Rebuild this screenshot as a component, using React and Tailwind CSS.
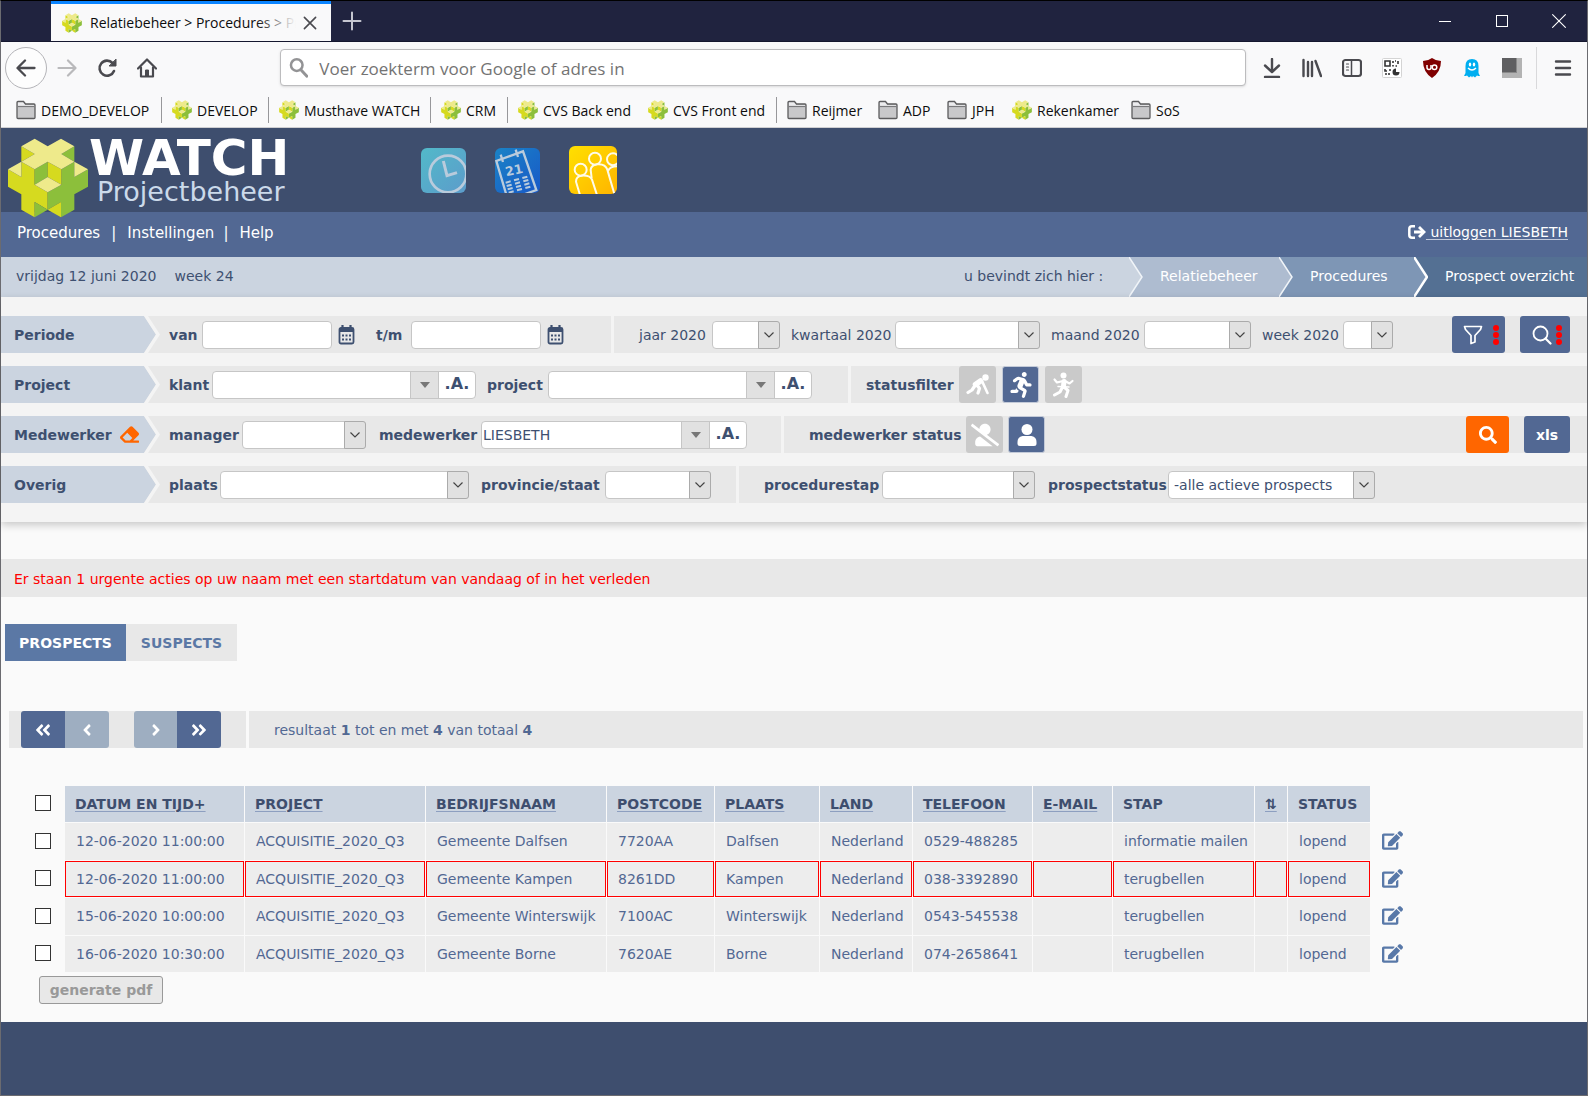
import React from "react";
import {
  FaAngleDoubleLeft,
  FaAngleDoubleRight,
  FaAngleLeft,
  FaAngleRight,
  FaEdit,
  FaEraser,
  FaRunning,
  FaSearch,
  FaUserSlash,
} from "react-icons/fa";

/* ---------- logo and drawn icons ---------- */

function CubeLogo({ className }) {
  return (
    <svg viewBox="22 31 244 240" className={className} aria-hidden="true">
      <path fill="#d6da1f" d="M64 56 104 79 64 102ZM24 125 64 148V102L104 125V171L143 194V246L104 223V269L64 246V200L24 177Z" />
      <path fill="#8cbf3b" d="M223 56 184 79 223 102ZM264 125 223 148V102L184 125V171L143 194V246L183 223V269L223 246V200L264 177Z" />
      <path fill="#8cbf3b" d="M104 125 143 102V148L104 171ZM104 223V269L143 246Z" />
      <path fill="#d6da1f" d="M184 125 143 102V148L184 171ZM183 223V269L143 246Z" />
      <path
        fill="#eeea8b"
        d="M64 56 104 33 143 56 183 33 223 56 184 79 223 102 184 125 143 102 104 125 64 102 104 79ZM24 125 64 102V148ZM223 102 264 125 223 148ZM143 148 184 171 143 194 104 171Z"
      />
    </svg>
  );
}

function ClockTile() {
  return (
    <svg viewBox="31 38 135 135" className="size-[45px] rounded-md" aria-hidden="true">
      <defs>
        <linearGradient id="clockFill" x1="0" y1="0" x2="1" y2="1">
          <stop offset="0" stopColor="#52b9c9" />
          <stop offset="1" stopColor="#5c9ccb" />
        </linearGradient>
      </defs>
      <rect x="31" y="38" width="135" height="135" fill="url(#clockFill)" />
      <circle cx="112" cy="116" r="55" fill="none" stroke="#b9cbdc" strokeWidth="8" />
      <path d="M98 77 109 121 139 112" fill="none" stroke="#b9cbdc" strokeWidth="9" />
    </svg>
  );
}

function CalendarTile() {
  const columns = [288, 313, 338];
  return (
    <svg viewBox="256 38 135 135" className="size-[45px] rounded-md" aria-hidden="true">
      <defs>
        <linearGradient id="calFill" x1="0" y1="0" x2="1" y2="1">
          <stop offset="0" stopColor="#1a83c6" />
          <stop offset="1" stopColor="#1859c8" />
        </linearGradient>
      </defs>
      <rect x="256" y="38" width="135" height="135" fill="url(#calFill)" />
      <path d="M292 185 260 77 340 48 380 164 330 182" fill="none" stroke="#b9cbdc" strokeWidth="7" />
      <path d="M273 58 280 80M318 43 325 65" stroke="#b9cbdc" strokeWidth="7" />
      <text x="290" y="123" transform="rotate(-12 290 123)" fill="#b9cbdc" fontFamily="DejaVu Sans" fontWeight="700" fontSize="38">
        21
      </text>
      {columns.map((x, i) => (
        <g key={x} transform={`translate(${x} ${139 - i * 7})`} stroke="#b9cbdc" strokeWidth="6">
          <path d="M0 3 15-1M3 13 18 9M6 23 21 19M9 33 24 29" />
        </g>
      ))}
    </svg>
  );
}

function PeopleTile() {
  return (
    <svg viewBox="477 33 144 144" className="size-12 rounded-md" aria-hidden="true">
      <defs>
        <linearGradient id="peopleFill" x1="0" y1="0" x2="1" y2="1">
          <stop offset="0" stopColor="#ffe000" />
          <stop offset="1" stopColor="#ffb400" />
        </linearGradient>
      </defs>
      <rect x="477" y="33" width="144" height="144" fill="url(#peopleFill)" />
      <g fill="none" stroke="#fffbe8" strokeWidth="6">
        <circle cx="512" cy="104" r="18" />
        <circle cx="555" cy="71" r="18" />
        <circle cx="609" cy="73" r="18" />
        <path d="M510 180 498 140Q498 124 514 122 540 120 546 134L561 180" />
        <path d="M545 130 542 104Q544 90 562 88 586 86 592 104L614 180" />
        <path d="M594 108Q600 94 622 94" />
      </g>
    </svg>
  );
}

function Folder() {
  return (
    <svg viewBox="0 0 20 20" className="size-5" aria-hidden="true">
      <path d="M1 2.5Q1 1.5 2 1.5H7.5L9.5 4H18Q19 4 19 5V17.5Q19 18.500 18 18.500H2Q1 18.500 1 17.500Z" fill="#c8c8ca" stroke="#5c5c5e" strokeWidth="1.300" />
      <path d="M2 2.500H7L9 5H18V6H2Z" fill="#ececee" />
      <path d="M1.500 6.500H18.500" stroke="#7a7a7c" strokeWidth="1.200" />
    </svg>
  );
}

function Icon({ children, size = "size-5", color = "#4a4a4f", width = 2 }) {
  return (
    <svg viewBox="0 0 20 20" className={size} fill="none" stroke={color} strokeWidth={width} strokeLinecap="round" strokeLinejoin="round" aria-hidden="true">
      {children}
    </svg>
  );
}

function DateIcon() {
  return (
    <svg viewBox="0 0 17 20" className="h-5 w-[17px]" aria-hidden="true">
      <path d="M4.500 0V4M12.500 0V4" stroke="#3e5070" strokeWidth="2.200" />
      <rect x="1.500" y="3" width="14" height="15.500" rx="1.500" fill="none" stroke="#3e5070" strokeWidth="1.800" />
      <rect x="1.500" y="3" width="14" height="4" fill="#3e5070" />
      <path d="M4 10.500H13M4 14.500H13" stroke="#3e5070" strokeWidth="2.200" strokeDasharray="2 1.500" />
    </svg>
  );
}

function FunnelIcon() {
  return (
    <svg viewBox="0 0 20 20" className="size-5" fill="none" stroke="#fff" strokeWidth="1.700" strokeLinejoin="round" aria-hidden="true">
      <path d="M1.500 1.500H18.500L17.500 4.500 12 10.500V17L8 18.500V10.500L2.500 4.500Z" />
    </svg>
  );
}

function LensIcon() {
  return (
    <svg viewBox="0 0 20 20" className="size-5" fill="none" stroke="#fff" strokeWidth="1.800" strokeLinecap="round" aria-hidden="true">
      <circle cx="8.500" cy="8.500" r="7" />
      <path d="M13.500 13.500 18.500 18.500" strokeWidth="2.200" />
    </svg>
  );
}

function StartFigure() {
  return (
    <svg viewBox="0 0 24 24" className="size-6" fill="none" stroke="#fff" strokeLinecap="round" strokeLinejoin="round" aria-hidden="true">
      <circle cx="19.500" cy="4.500" r="3.200" fill="#fff" stroke="none" />
      <path d="M14.500 8 9.500 11.500" strokeWidth="5.500" />
      <path d="M16 8 21.500 20" strokeWidth="2.600" />
      <path d="M11 12 13.500 15.500 12 20M8 14 6 17 2 19.500" strokeWidth="3.200" />
    </svg>
  );
}

function FinishFigure() {
  return (
    <svg viewBox="0 0 24 26" className="h-[26px] w-6" fill="none" stroke="#fff" strokeLinecap="round" strokeLinejoin="round" aria-hidden="true">
      <circle cx="11.500" cy="3.500" r="3" fill="#fff" stroke="none" />
      <path d="M12 9.500 11.500 14" strokeWidth="5" />
      <path d="M11 9 5 10.500 2.500 7.500M13 9 17.500 11.500 20.500 9" strokeWidth="2.200" />
      <path d="M10.500 15 8 20 2.500 23M12 15 16 18.500 14 24.500" strokeWidth="3" />
      <path d="M6 14.500 17 15" strokeWidth="1.500" />
    </svg>
  );
}

function PersonFigure() {
  return (
    <svg viewBox="0 0 20 22" className="h-[22px] w-5" fill="#fff" aria-hidden="true">
      <circle cx="10" cy="5.500" r="5.500" />
      <path d="M5.500 12H14.500Q19.500 13 19.500 18V19.500Q19.500 22 17 22H3Q.5 22 .5 19.500V18Q.5 13 5.500 12Z" />
    </svg>
  );
}

function LogoutIcon() {
  return (
    <svg viewBox="0 0 18 14" className="h-3.5 w-[18px]" fill="none" stroke="#fff" strokeWidth="2.500" aria-hidden="true">
      <path d="M7 1.300H4Q1.300 1.300 1.300 4V10Q1.300 12.700 4 12.700H7" />
      <path d="M6 7H14" strokeWidth="3" />
      <path d="M11 2 16 7 11 12" strokeWidth="2.800" />
    </svg>
  );
}

/* ---------- browser chrome ---------- */

function TitleBar() {
  return (
    <div className="flex h-[41px] items-stretch border-b border-[#15172f] bg-[#20233f]">
      <div className="ml-[50px] flex w-[280px] items-center border-t-[3px] border-[#0a84ff] bg-[#f9f9fa] pl-[11px] pr-[13px]">
        <CubeLogo className="size-5 shrink-0" />
        <div className="relative ml-2 flex-1 overflow-hidden whitespace-nowrap text-sm text-[#0c0c0d]">
          Relatiebeheer &gt; Procedures &gt; Prospect overzicht
          <span className="absolute inset-y-0 right-0 w-10 bg-linear-to-l from-[#f9f9fa] to-transparent" />
        </div>
        <button type="button" aria-label="Tabblad sluiten" className="ml-1.5">
          <Icon size="size-4">
            <path d="M3 3 17 17M17 3 3 17" />
          </Icon>
        </button>
      </div>
      <button type="button" aria-label="Nieuw tabblad" className="ml-[11px] self-center">
        <Icon color="#c5c6d0">
          <path d="M10 1.500V18.500M1.500 10H18.500" />
        </Icon>
      </button>
      <div className="ml-auto flex items-center">
        <button type="button" aria-label="Minimaliseren" className="flex w-[57px] justify-center">
          <span className="h-px w-3 bg-white" />
        </button>
        <button type="button" aria-label="Maximaliseren" className="flex w-[57px] justify-center">
          <span className="size-3 border border-white" />
        </button>
        <button type="button" aria-label="Sluiten" className="flex w-[57px] justify-center">
          <Icon size="size-4" color="#fff" width={1.4}>
            <path d="M2 2 18 18M18 2 2 18" />
          </Icon>
        </button>
      </div>
    </div>
  );
}

function ToolButton({ label, children }) {
  return (
    <button type="button" aria-label={label} className="flex w-10 shrink-0 justify-center">
      {children}
    </button>
  );
}

function NavBar() {
  return (
    <div className="flex h-[51px] items-center pl-1">
      <button type="button" aria-label="Vorige" className="flex size-[42px] shrink-0 items-center justify-center rounded-full border border-[#b4b4b8] bg-[#fdfdfd]">
        <Icon width={2.3}>
          <path d="M18.500 10H2M9 2.500 1.500 10 9 17.500" />
        </Icon>
      </button>
      <ToolButton label="Volgende">
        <Icon color="#b9b9bb" width={2.2}>
          <path d="M1.500 10H18M11 2.500 18.500 10 11 17.500" />
        </Icon>
      </ToolButton>
      <ToolButton label="Vernieuwen">
        <Icon width={2.6}>
          <path d="M17 13A7.500 7.500 0 1 1 15.500 5" />
          <path d="M19 1.500V8H12.500Z" fill="#4a4a4f" strokeWidth="1" />
        </Icon>
      </ToolButton>
      <ToolButton label="Startpagina">
        <Icon width={2.2}>
          <path d="M1 10.500 10 1.500 19 10.500M4 9.500V18.500H16V9.500" />
          <path d="M8.500 18V12H11.500V18Z" fill="#4a4a4f" strokeWidth="1" />
        </Icon>
      </ToolButton>
      <div className="ml-[113px] flex h-[37px] flex-1 items-center rounded-sm border border-[#bcbcbe] bg-white pl-2 shadow-sm">
        <Icon color="#939395" width={2.6}>
          <circle cx="8" cy="7" r="6" />
          <path d="M12.500 12 18.500 18.500" strokeWidth="3" />
        </Icon>
        <input
          type="text"
          aria-label="Adresbalk"
          placeholder="Voer zoekterm voor Google of adres in"
          className="ml-[11px] w-full bg-transparent pt-0.5 text-[17px] outline-none placeholder:text-[#737373]"
        />
      </div>
      <div className="ml-1.5 flex items-center">
        <ToolButton label="Downloads">
          <Icon width={2.4}>
            <path d="M10 1V13M3 7.500 10 14 17 7.500M3 19H17" />
          </Icon>
        </ToolButton>
        <ToolButton label="Bibliotheek">
          <Icon width={2.4}>
            <path d="M1.500 2V18M6 4V18M10 4V18M13.500 3 19 18" />
          </Icon>
        </ToolButton>
        <ToolButton label="Zijbalk">
          <Icon width={2.2}>
            <rect x="1" y="2" width="18" height="16" rx="2.500" />
            <path d="M9.500 2V18" strokeWidth="1.500" />
            <path d="M4.500 6H6.500M4.500 9H6.500M4.500 12H6.500" strokeWidth="1.200" />
          </Icon>
        </ToolButton>
        <ToolButton label="QR-code">
          <svg viewBox="0 0 20 20" className="size-5" aria-hidden="true">
            <rect x=".5" y=".5" width="19" height="19" rx="1" fill="#fff" stroke="#d4d4d4" />
            <path d="M3 3H8V8H3ZM11 3V5M11 7V8.500M13 3H14M16 3V6M13.500 8H15M3 11V13H5M7 12H9M3 16H5M7 15V17" fill="none" stroke="#333" strokeWidth="1.600" />
            <path d="M14 10.500A3.500 3.500 0 1 0 17.500 14H14Z" fill="#333" />
          </svg>
        </ToolButton>
        <ToolButton label="uBlock Origin">
          <svg viewBox="0 0 20 20" className="size-5" aria-hidden="true">
            <path d="M10 0Q14 3 19 3 19 14 10 20 1 14 1 3 6 3 10 0Z" fill="#800000" />
            <path d="M5 7V9.500Q5 11.500 7 11.500 9 11.500 9 9.500V7" fill="none" stroke="#fff" strokeWidth="1.500" />
            <circle cx="12.500" cy="9.200" r="2.300" fill="none" stroke="#fff" strokeWidth="1.500" />
          </svg>
        </ToolButton>
        <ToolButton label="Ghostery">
          <svg viewBox="0 0 20 20" className="size-5" aria-hidden="true">
            <path d="M10 1Q16.500 1 16.500 8V15L18 18Q16 18 15 17.500L13 19.500 11 18 10 19.500 9 18 7 19.500 5 17.500Q4 18 2 18L3.500 15V8Q3.500 1 10 1Z" fill="#00aef0" />
            <ellipse cx="8" cy="6.500" rx="1.200" ry="2" fill="#fff" />
            <ellipse cx="12" cy="6.500" rx="1.200" ry="2" fill="#fff" />
            <path d="M6 10Q10 14 14 10" fill="none" stroke="#fff" strokeWidth="1.400" />
          </svg>
        </ToolButton>
        <ToolButton label="Extensie">
          <svg viewBox="0 0 20 20" className="size-5" aria-hidden="true">
            <path d="M0 0H20V20H0Z" fill="#b3b3b3" />
            <path d="M0 0H15V15H0Z" fill="#8a8a8a" />
            <path d="M0 0H14V14H0Z" fill="#5f5f61" />
          </svg>
        </ToolButton>
        <span className="ml-1 h-[42px] w-px bg-[#d9d9db]" />
        <button type="button" aria-label="Menu" className="ml-4 mr-3.5">
          <Icon width={2.4}>
            <path d="M3 3.500H17M3 10H17M3 16.500H17" />
          </Icon>
        </button>
      </div>
    </div>
  );
}

const bookmarks = [
  { label: "DEMO_DEVELOP", folder: true, width: "w-[145px]", divider: true },
  { label: "DEVELOP", width: "w-[96px]", divider: true },
  { label: "Musthave WATCH", width: "w-[151px]", divider: true },
  { label: "CRM", width: "w-[66px]", divider: true },
  { label: "CVS Back end", width: "w-[130px]" },
  { label: "CVS Front end", width: "w-[128px]", divider: true },
  { label: "Reijmer", folder: true, width: "w-[91px]" },
  { label: "ADP", folder: true, width: "w-[69px]" },
  { label: "JPH", folder: true, width: "w-[65px]" },
  { label: "Rekenkamer", width: "w-[119px]" },
  { label: "SoS", folder: true, width: "w-[60px]" },
];

function BookmarksBar() {
  return (
    <nav aria-label="Bladwijzers" className="flex h-[35px] items-center border-b border-[#cfcfd2] pl-[15px] text-sm text-[#0c0c0d]">
      {bookmarks.map((b) => (
        <React.Fragment key={b.label}>
          <a href="#" className={`flex shrink-0 items-center gap-[5px] whitespace-nowrap ${b.width}`}>
            {b.folder ? <Folder /> : <CubeLogo className="size-5" />}
            <span className="pt-0.5">{b.label}</span>
          </a>
          {b.divider && <span className="mr-2.5 h-[26px] w-px bg-[#97979a]" />}
        </React.Fragment>
      ))}
    </nav>
  );
}

/* ---------- application header ---------- */

function AppHeader() {
  return (
    <header>
      <div className="flex h-[84px] bg-[#3e4e6e]">
        <div className="flex w-[420px] shrink-0 pl-1.5 pt-2.5">
          <CubeLogo className="relative z-10 h-20 w-[82px] shrink-0" />
          <div>
            <div className="text-[50px] font-bold leading-[40px] text-white">WATCH</div>
            <div className="pl-2 text-[27px] leading-[27px] text-[#cbdaea]">Projectbeheer</div>
          </div>
        </div>
        <div className="flex items-center gap-[29px]">
          <a href="#" aria-label="Uren"><ClockTile /></a>
          <a href="#" aria-label="Agenda"><CalendarTile /></a>
          <a href="#" aria-label="Relaties"><PeopleTile /></a>
        </div>
      </div>
      <div className="flex h-[45px] justify-between bg-[#526893] pl-4 pr-[19px] text-white">
        <nav className="flex h-[43px] items-center text-[15px]">
          <a href="#">Procedures</a>
          <span className="px-[11px]">|</span>
          <a href="#">Instellingen</a>
          <span className="pl-[9px] pr-[11px]">|</span>
          <a href="#">Help</a>
        </nav>
        <a href="#" className="flex h-10 items-center text-sm">
          <LogoutIcon />
          <span className="underline decoration-[#c3cbdc] underline-offset-2">&nbsp;uitloggen LIESBETH</span>
        </a>
      </div>
    </header>
  );
}

function CrumbArrow({ from, to, line, width }) {
  return (
    <svg viewBox="0 0 14 40" className="h-10 w-3.5 shrink-0" aria-hidden="true">
      <path d="M0 0H14V40H0Z" fill={to} />
      <path d="M0 0 13 20 0 40Z" fill={from} />
      <path d="M0 0 13 20 0 40" fill="none" stroke={line} strokeWidth={width} />
    </svg>
  );
}

function Breadcrumbs() {
  return (
    <div className="flex h-10 items-stretch justify-between bg-[#cbd4e0] text-sm leading-[38px] text-[#3e5070]">
      <div className="flex gap-[18px] pl-[15px]">
        <span>vrijdag 12 juni 2020</span>
        <span>week 24</span>
      </div>
      <nav aria-label="Kruimelpad" className="flex whitespace-nowrap">
        <span className="w-[165px]">u bevindt zich hier :</span>
        <CrumbArrow from="#cbd4e0" to="#aebcd0" line="#f0f4f8" width={1.5} />
        <a href="#" className="w-[136px] bg-[#aebcd0] pl-[17px] text-white">Relatiebeheer</a>
        <CrumbArrow from="#aebcd0" to="#7e96b5" line="#f0f4f8" width={1.5} />
        <a href="#" className="w-[121px] bg-[#7e96b5] pl-[17px] text-white">Procedures</a>
        <CrumbArrow from="#7e96b5" to="#547093" line="#ffffff" width={2.5} />
        <a href="#" className="w-[159px] bg-[#547093] pl-[17px] text-white">Prospect overzicht</a>
      </nav>
    </div>
  );
}

/* ---------- filter panel ---------- */

const fieldBox = "h-7 rounded-[4px] border border-[#c6c6c6] bg-white text-sm text-[#3e5070] outline-none";

function SelectField({ id, label, labelClass = "", width, options = [""] }) {
  return (
    <div className="flex shrink-0 items-center">
      <label htmlFor={id} className={`shrink-0 whitespace-nowrap ${labelClass}`}>
        {label}
      </label>
      <span className={`relative flex ${width}`}>
        <select id={id} className={`w-full appearance-none pl-[5px] font-normal ${fieldBox}`}>
          {options.map((o) => (
            <option key={o}>{o}</option>
          ))}
        </select>
        <span className="pointer-events-none absolute inset-y-0 right-0 flex w-[22px] items-center justify-center rounded-r-[3px] border border-[#ababab] bg-[#e1e1e1]">
          <svg viewBox="0 0 10 6" className="h-1.5 w-2.5" fill="none" stroke="#444" strokeWidth="1.200" aria-hidden="true">
            <path d="M.5 .5 5 5 9.500 .5" />
          </svg>
        </span>
      </span>
    </div>
  );
}

function DateField({ id, label, labelClass }) {
  return (
    <div className="flex shrink-0 items-center">
      <label htmlFor={id} className={`shrink-0 ${labelClass}`}>{label}</label>
      <input id={id} type="text" className={`w-[130px] px-1 font-normal ${fieldBox}`} />
      <button type="button" aria-label={`Kalender ${label}`} className="ml-1.5">
        <DateIcon />
      </button>
    </div>
  );
}

function ComboField({ id, label, labelClass, width, value }) {
  return (
    <div className="flex shrink-0 items-center">
      <label htmlFor={id} className={`shrink-0 ${labelClass}`}>{label}</label>
      <div className={`flex items-center overflow-hidden ${width} ${fieldBox}`}>
        <input id={id} type="text" defaultValue={value} className="h-full min-w-0 flex-1 pl-px text-sm font-normal outline-none" />
        <button type="button" aria-label={`${label} kiezen`} className="flex h-full w-[29px] items-center justify-center border-x border-[#c6c6c6] bg-[#e1e1e1]">
          <span className="border-x-[5px] border-t-[6px] border-x-transparent border-t-[#777]" />
        </button>
        <button type="button" className="w-9 pb-0.5 text-base font-bold leading-5">.A.</button>
      </div>
    </div>
  );
}

function FilterRow({ title, icon, leftWidth, left, right, rightPad = "pl-[25px]", actions }) {
  return (
    <section className="flex h-[37px] bg-[#e8e8e8]">
      <h2 className="flex w-[143px] shrink-0 items-center bg-[#cbd4e0] pl-[13px] font-bold">
        {title}
        {icon}
      </h2>
      <svg viewBox="0 0 16 37" className="h-[37px] w-4 shrink-0" aria-hidden="true">
        <path d="M0 0 12 18.500 0 37Z" fill="#cbd4e0" />
        <path d="M0 0H4L16 18.500 4 37H0L12 18.500Z" fill="#f4f4f4" />
      </svg>
      <div className={`flex shrink-0 items-center pl-[9px] font-bold ${leftWidth}`}>{left}</div>
      <div className={`flex flex-1 items-center border-l-[3px] border-[#f4f4f4] ${rightPad}`}>
        {right}
        {actions && <div className="ml-auto flex gap-[15px] pr-[17px]">{actions}</div>}
      </div>
    </section>
  );
}

const toggleOff = "flex size-[37px] items-center justify-center rounded-[3px] bg-[#cacaca] text-white";
const toggleOn = "flex size-[37px] items-center justify-center rounded-[3px] border border-[#c3cad8] bg-[#526893] text-white";
const actionButton = "flex h-[37px] items-center justify-center rounded-[3px] bg-[#526893] text-white";

function RedDots() {
  return (
    <span className="flex flex-col gap-px">
      <span className="size-1.5 rounded-full bg-[#ff0000]" />
      <span className="size-1.5 rounded-full bg-[#ff0000]" />
      <span className="size-1.5 rounded-full bg-[#ff0000]" />
    </span>
  );
}

function Filters() {
  return (
    <form className="flex flex-col gap-[13px] bg-[#f4f4f4] py-[19px] text-sm text-[#3e5070] shadow-[0_3px_8px_rgba(0,0,0,0.2)]">
      <FilterRow
        title="Periode"
        leftWidth="w-[451px] gap-[21px]"
        left={
          <>
            <DateField id="van" label="van" labelClass="w-[33px]" />
            <DateField id="tm" label="t/m" labelClass="w-[35px]" />
          </>
        }
        right={
          <div className="flex gap-[11px]">
            <SelectField id="jaar" label="jaar 2020" labelClass="w-[73px]" width="w-[68px]" />
            <SelectField id="kwartaal" label="kwartaal 2020" labelClass="w-[104px]" width="w-[145px]" />
            <SelectField id="maand" label="maand 2020" labelClass="w-[93px]" width="w-[107px]" />
            <SelectField id="week" label="week 2020" labelClass="w-[81px]" width="w-[50px]" />
          </div>
        }
        actions={
          <>
            <button type="button" aria-label="Filteropties" className={`w-[53px] gap-2.5 pl-1 ${actionButton}`}>
              <FunnelIcon />
              <RedDots />
            </button>
            <button type="button" aria-label="Zoekopties" className={`w-[50px] gap-1 pl-1 ${actionButton}`}>
              <LensIcon />
              <RedDots />
            </button>
          </>
        }
      />
      <FilterRow
        title="Project"
        leftWidth="w-[688px] gap-[11px]"
        rightPad="pl-[15px]"
        left={
          <>
            <ComboField id="klant" label="klant" labelClass="w-[43px]" width="w-[264px]" />
            <ComboField id="project" label="project" labelClass="w-[61px]" width="w-[264px]" />
          </>
        }
        right={
          <div className="flex items-center gap-1.5">
            <span className="w-[87px] font-bold">statusfilter</span>
            <button type="button" aria-label="Te starten" className={toggleOff}><StartFigure /></button>
            <button type="button" aria-label="Lopend" aria-pressed="true" className={toggleOn}><FaRunning className="size-[26px]" /></button>
            <button type="button" aria-label="Afgerond" className={toggleOff}><FinishFigure /></button>
          </div>
        }
      />
      <FilterRow
        title="Medewerker"
        icon={<FaEraser className="ml-2 size-[19px] text-[#ff6600]" />}
        leftWidth="w-[621px] gap-[13px]"
        left={
          <>
            <SelectField id="manager" label="manager" labelClass="w-[73px]" width="w-[124px]" />
            <ComboField id="medewerker" label="medewerker" labelClass="w-[102px]" width="w-[266px]" value="LIESBETH" />
          </>
        }
        right={
          <div className="flex items-center gap-[5px]">
            <span className="w-[152px] whitespace-nowrap font-bold">medewerker status</span>
            <button type="button" aria-label="Inactief" className={toggleOff}><FaUserSlash className="size-7" /></button>
            <button type="button" aria-label="Actief" aria-pressed="true" className={toggleOn}><PersonFigure /></button>
          </div>
        }
        actions={
          <>
            <button type="submit" aria-label="Zoeken" className="flex h-[37px] w-[43px] items-center justify-center rounded-[3px] bg-[#ff6600] text-white">
              <FaSearch className="size-[18px]" />
            </button>
            <button type="button" className={`w-[46px] font-bold ${actionButton}`}>xls</button>
          </>
        }
      />
      <FilterRow
        title="Overig"
        leftWidth="w-[576px] gap-3"
        left={
          <>
            <SelectField id="plaats" label="plaats" labelClass="w-[51px]" width="w-[249px]" />
            <SelectField id="provincie" label="provincie/staat" labelClass="w-[124px]" width="w-[106px]" />
          </>
        }
        right={
          <div className="flex gap-[13px] font-bold">
            <SelectField id="procedurestap" label="procedurestap" labelClass="w-[118px]" width="w-[153px]" />
            <SelectField id="prospectstatus" label="prospectstatus" labelClass="w-[120px]" width="w-[207px]" options={["-alle actieve prospects"]} />
          </div>
        }
      />
    </form>
  );
}

/* ---------- results ---------- */

function Pager() {
  return (
    <div className="ml-2 mr-1 flex h-[37px] bg-[#e8e8e8] text-sm text-[#526893]">
      <div className="flex w-[237px] gap-[25px] pl-3 text-white">
        <div className="flex">
          <button type="button" aria-label="Eerste" className="flex w-11 items-center justify-center rounded-l-[3px] bg-[#526893]">
            <FaAngleDoubleLeft className="size-[18px]" />
          </button>
          <button type="button" aria-label="Vorige pagina" className="flex w-11 items-center justify-center rounded-r-[3px] bg-[#9eaec1]">
            <FaAngleLeft className="size-[18px]" />
          </button>
        </div>
        <div className="flex">
          <button type="button" aria-label="Volgende pagina" className="flex w-[43px] items-center justify-center rounded-l-[3px] bg-[#9eaec1]">
            <FaAngleRight className="size-[18px]" />
          </button>
          <button type="button" aria-label="Laatste" className="flex w-11 items-center justify-center rounded-r-[3px] bg-[#526893]">
            <FaAngleDoubleRight className="size-[18px]" />
          </button>
        </div>
      </div>
      <p className="flex-1 border-l-[3px] border-[#fafafa] pl-[25px] leading-[39px]">
        resultaat <b>1</b> tot en met <b>4</b> van totaal <b>4</b>
      </p>
    </div>
  );
}

const columns = [
  { label: "DATUM EN TIJD+", width: "w-[179px]", sort: true },
  { label: "PROJECT", width: "w-[180px]", sort: true },
  { label: "BEDRIJFSNAAM", width: "w-[180px]", sort: true },
  { label: "POSTCODE", width: "w-[107px]", sort: true },
  { label: "PLAATS", width: "w-[104px]", sort: true },
  { label: "LAND", width: "w-[92px]", sort: true },
  { label: "TELEFOON", width: "w-[119px]", sort: true },
  { label: "E-MAIL", width: "w-[79px]", sort: true },
  { label: "STAP", width: "w-[141px]" },
  { label: "⇅", width: "w-[32px]", sort: true },
  { label: "STATUS", width: "w-[82px]" },
];

const rows = [
  { cells: ["12-06-2020 11:00:00", "ACQUISITIE_2020_Q3", "Gemeente Dalfsen", "7720AA", "Dalfsen", "Nederland", "0529-488285", "", "informatie mailen", "", "lopend"] },
  { urgent: true, cells: ["12-06-2020 11:00:00", "ACQUISITIE_2020_Q3", "Gemeente Kampen", "8261DD", "Kampen", "Nederland", "038-3392890", "", "terugbellen", "", "lopend"] },
  { cells: ["15-06-2020 10:00:00", "ACQUISITIE_2020_Q3", "Gemeente Winterswijk", "7100AC", "Winterswijk", "Nederland", "0543-545538", "", "terugbellen", "", "lopend"] },
  { cells: ["16-06-2020 10:30:00", "ACQUISITIE_2020_Q3", "Gemeente Borne", "7620AE", "Borne", "Nederland", "074-2658641", "", "terugbellen", "", "lopend"] },
];

const checkBox = "block size-4 appearance-none border border-[#333] bg-white";

function ProspectTable() {
  return (
    <table className="ml-[33px] table-fixed border-separate border-spacing-px text-left text-sm text-[#526893]">
      <colgroup>
        <col className="w-[29px]" />
        {columns.map((c) => (
          <col key={c.label} className={c.width} />
        ))}
        <col className="w-9" />
      </colgroup>
      <thead>
        <tr className="h-9 text-[#3e4e6e]">
          <td className="pb-0.5">
            <input type="checkbox" aria-label="Alles selecteren" className={checkBox} />
          </td>
          {columns.map((c) => (
            <th key={c.label} scope="col" className="whitespace-nowrap bg-[#cbd4e0] pl-2.5 font-bold">
              {c.sort ? (
                <a href="#" className="underline decoration-[#8d9fc0] underline-offset-2">{c.label}</a>
              ) : (
                c.label
              )}
            </th>
          ))}
          <td />
        </tr>
      </thead>
      <tbody>
        {rows.map((r) => (
          <tr key={r.cells[0] + r.cells[2]} className="h-[37px] even:h-9">
            <td className="pb-0.5">
              <input type="checkbox" aria-label={`Selecteer ${r.cells[2]}`} className={checkBox} />
            </td>
            {r.cells.map((cell, i) => (
              <td
                key={i}
                className={
                  r.urgent
                    ? "whitespace-nowrap border border-[#ff0000] bg-[#ededed] pb-px pl-2.5"
                    : "whitespace-nowrap border border-[#ededed] bg-[#ededed] pb-px pl-2.5"
                }
              >
                {cell}
              </td>
            ))}
            <td className="pb-0.5 pl-[11px]">
              <a href="#" aria-label={`Bewerk ${r.cells[2]}`} className="block text-[#5878a8]">
                <FaEdit className="size-[21px]" />
              </a>
            </td>
          </tr>
        ))}
      </tbody>
    </table>
  );
}

export default function App() {
  return (
    <div className="flex min-h-screen flex-col border border-[#6b6b70] border-t-black bg-[#fafafa] font-['DejaVu_Sans',Verdana,sans-serif]">
      <div className="bg-[#f9f9fa] font-['Open_Sans','Segoe_UI',sans-serif]">
        <TitleBar />
        <NavBar />
        <BookmarksBar />
      </div>
      <AppHeader />
      <Breadcrumbs />
      <Filters />
      <main className="pb-[18px]">
        <p className="mt-[37px] h-[38px] bg-[#e8e8e8] pl-[13px] text-sm leading-[40px] text-[#ff0000]">
          Er staan 1 urgente acties op uw naam met een startdatum van vandaag of in het verleden
        </p>
        <div role="tablist" className="ml-1 mt-[27px] flex h-[37px] text-sm font-bold">
          <button type="button" role="tab" aria-selected="true" className="w-[121px] bg-[#5b78a5] text-white">PROSPECTS</button>
          <button type="button" role="tab" aria-selected="false" className="w-[111px] bg-[#e8e8e8] text-[#5b78a5]">SUSPECTS</button>
        </div>
        <div className="mt-[50px]">
          <Pager />
        </div>
        <div className="mt-[37px]">
          <ProspectTable />
        </div>
        <button type="button" disabled className="ml-[38px] mt-[3px] h-7 w-[124px] rounded-[3px] border border-[#999] bg-[#e8e8e8] text-sm font-bold text-[#999]">
          generate pdf
        </button>
      </main>
      <footer className="flex-1 bg-[#3e4e6e]" />
    </div>
  );
}
